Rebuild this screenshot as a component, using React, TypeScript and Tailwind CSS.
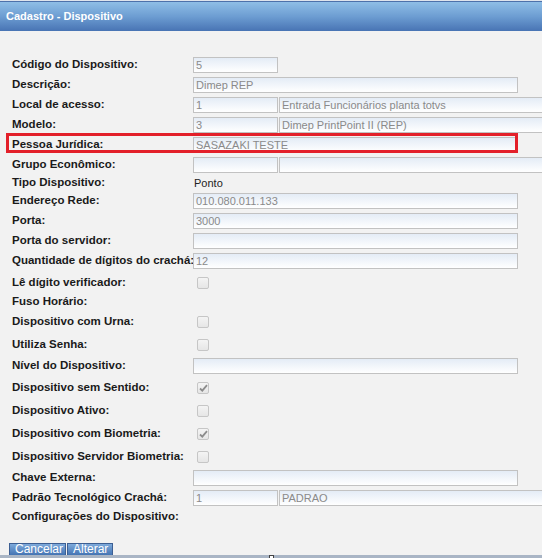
import React from "react";

const font = { fontFamily: '"Liberation Sans", Arial, sans-serif' };

function Label({ children }: { children: React.ReactNode }) {
    return <div className="w-[193px] shrink-0 pl-3 text-[11.5px] font-bold text-[#1a1a1a] whitespace-nowrap">{children}</div>;
}

function Field({ value = "", className = "" }: { value?: string; className?: string }) {
    return (
        <div
            className={`h-4 shrink-0 border border-[#c2c2c2] bg-linear-to-b from-[#e4ecf6] to-white px-[2px] text-[11px] leading-[14px] text-[#8a8a8a] whitespace-nowrap overflow-hidden ${className}`}
        >
            {value}
        </div>
    );
}

function Check({ checked = false }: { checked?: boolean }) {
    return (
        <div className="ml-1 flex h-3 w-3 items-center justify-center rounded-[2px] border border-[#c6c6c6] bg-linear-to-b from-[#f4f4f4] to-[#e6e6e6]">
            {checked && (
                <svg width="9" height="8" viewBox="0 0 9 8">
                    <path d="M1 4.5 L3.3 6.6 L8 1.2" stroke="#8c8c8c" strokeWidth="1.8" fill="none" />
                </svg>
            )}
        </div>
    );
}

function InputRow({ label, children }: { label: string; children: React.ReactNode }) {
    return (
        <div className="flex h-5 items-center">
            <Label>{label}</Label>
            <div className="flex items-center">{children}</div>
        </div>
    );
}

function CheckRow({ label, checked }: { label: string; checked?: boolean }) {
    return (
        <div className="flex h-[23px] items-center">
            <Label>{label}</Label>
            <Check checked={checked} />
        </div>
    );
}

export default function App() {
    return (
        <div className="flex h-[558px] w-[542px] flex-col overflow-hidden bg-[#f2f2f2]" style={font}>
            <div className="h-px bg-[#dfe4ec]" />
            <div className="flex h-[30px] items-center border-t border-[#4d71aa] bg-linear-to-b from-[#8fbee6] via-[#6d9dd2] to-[#4874b4] pl-[6px] text-[11px] font-bold text-white">
                Cadastro - Dispositivo
            </div>

            <div className="flex flex-col pt-6">
                <InputRow label="Código do Dispositivo:">
                    <Field value="5" className="w-[85px]" />
                </InputRow>
                <InputRow label="Descrição:">
                    <Field value="Dimep REP" className="w-[325px]" />
                </InputRow>
                <InputRow label="Local de acesso:">
                    <Field value="1" className="w-[85px]" />
                    <Field value="Entrada Funcionários planta totvs" className="ml-px w-[300px]" />
                </InputRow>
                <InputRow label="Modelo:">
                    <Field value="3" className="w-[85px]" />
                    <Field value="Dimep PrintPoint II (REP)" className="ml-px w-[300px]" />
                </InputRow>
                <div className="relative">
                    <InputRow label="Pessoa Jurídica:">
                        <Field value="SASAZAKI TESTE" className="w-[325px]" />
                    </InputRow>
                    <div className="pointer-events-none absolute left-[6px] top-[-2px] h-5 w-[512px] border-[3px] border-[#e3202a]" />
                </div>
                <InputRow label="Grupo Econômico:">
                    <Field className="w-[85px]" />
                    <Field className="ml-px w-[300px]" />
                </InputRow>
                <div className="flex h-4 items-center">
                    <Label>Tipo Dispositivo:</Label>
                    <div className="pl-px text-[11px] text-[#222]">Ponto</div>
                </div>
                <InputRow label="Endereço Rede:">
                    <Field value="010.080.011.133" className="w-[325px]" />
                </InputRow>
                <InputRow label="Porta:">
                    <Field value="3000" className="w-[325px]" />
                </InputRow>
                <InputRow label="Porta do servidor:">
                    <Field className="w-[325px]" />
                </InputRow>
                <InputRow label="Quantidade de dígitos do crachá:">
                    <Field value="12" className="w-[325px]" />
                </InputRow>
                <CheckRow label="Lê dígito verificador:" />
                <div className="flex h-4 items-center">
                    <Label>Fuso Horário:</Label>
                </div>
                <CheckRow label="Dispositivo com Urna:" />
                <CheckRow label="Utiliza Senha:" />
                <InputRow label="Nível do Dispositivo:">
                    <Field className="w-[325px]" />
                </InputRow>
                <CheckRow label="Dispositivo sem Sentido:" checked />
                <CheckRow label="Dispositivo Ativo:" />
                <CheckRow label="Dispositivo com Biometria:" checked />
                <CheckRow label="Dispositivo Servidor Biometria:" />
                <InputRow label="Chave Externa:">
                    <Field className="w-[325px]" />
                </InputRow>
                <InputRow label="Padrão Tecnológico Crachá:">
                    <Field value="1" className="w-[85px]" />
                    <Field value="PADRAO" className="ml-px w-[300px]" />
                </InputRow>
                <div className="flex h-[18px] items-center">
                    <Label>Configurações do Dispositivo:</Label>
                </div>
            </div>

            <div className="mt-auto flex pl-[9px]">
                <button className="h-3 w-[57px] border-x border-t border-[#3d5f93] bg-linear-to-b from-[#7eaadb] to-[#4474b3] pl-[5px] text-left text-[12px] leading-[11px] text-white">
                    Cancelar
                </button>
                <button className="ml-px h-3 w-[46px] border-x border-t border-[#3d5f93] bg-linear-to-b from-[#7eaadb] to-[#4474b3] pl-[5px] text-left text-[12px] leading-[11px] text-white">
                    Alterar
                </button>
            </div>
            <div className="flex h-[3px] bg-[#a9b5c5] pl-[269px]">
                <div className="h-[3px] w-[5px] border-x border-t border-[#444] bg-white" />
            </div>
        </div>
    );
}
